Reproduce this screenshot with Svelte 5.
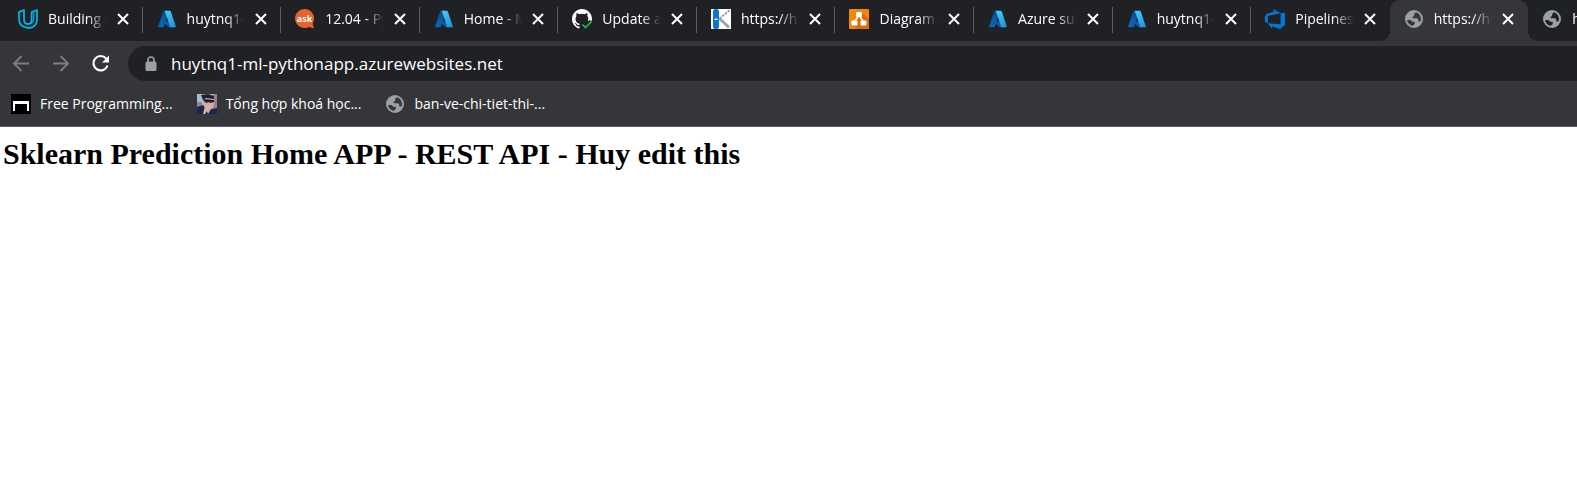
<script>
  const tabs = [
    { icon: 'udacity', title: 'Building a CI/CD' },
    { icon: 'azure', title: 'huytnq1-ml' },
    { icon: 'ask', title: '12.04 - Python' },
    { icon: 'azure', title: 'Home - Microsoft' },
    { icon: 'github', title: 'Update app' },
    { icon: 'kudu', title: 'https://huytnq1' },
    { icon: 'diagram', title: 'Diagram.drawio' },
    { icon: 'azure', title: 'Azure subscription' },
    { icon: 'azure', title: 'huytnq1-ml' },
    { icon: 'devops', title: 'Pipelines - Runs' },
    { icon: 'globe', title: 'https://huytnq1', active: true },
    { icon: 'globe', title: 'https://huytnq1' },
  ];
  const bookmarks = [
    { icon: 'bench', title: 'Free Programming...' },
    { icon: 'portrait', title: 'Tổng hợp khoá học...' },
    { icon: 'globe', title: 'ban-ve-chi-tiet-thi-...' },
  ];
  let address = $state('huytnq1-ml-pythonapp.azurewebsites.net');
</script>

<svg class="defs" aria-hidden="true">
  <defs>
    <linearGradient id="az1" x1="0.6" y1="0" x2="0.3" y2="1"><stop offset="0" stop-color="#114a8b" /><stop offset="1" stop-color="#0669bc" /></linearGradient>
    <linearGradient id="az2" x1="0.3" y1="0" x2="0.7" y2="1"><stop offset="0" stop-color="#3ccbf4" /><stop offset="1" stop-color="#2892df" /></linearGradient>
  </defs>
</svg>

{#snippet icon(name)}
  <svg class="icon" viewBox="0 0 20 20" aria-hidden="true">
    {#if name === 'udacity'}
      <g fill="none" stroke="#02b3e4" stroke-width="1.8" stroke-linejoin="round">
        <path d="M1 3.100 6 1v9.600c0 2.800 1.400 4.400 3.700 4.400 2.400 0 3.900-1.600 3.900-4.400V3.100L19 1v10c0 4.600-3.600 8-8.300 8C5 18.500 1 15.600 1 10.600z" />
        <path d="M9.700 15c4 0 6-2 6-5V2.500" stroke-width="1.200" />
      </g>
    {:else if name === 'azure'}
      <svg x="1" y="1" width="18" height="18" viewBox="3 5 90 86">
        <path fill="url(#az1)" d="M33.338 6.544h26.038l-27.03 80.087a4.152 4.152 0 0 1-3.933 2.824H8.149a4.145 4.145 0 0 1-3.928-5.47L29.404 9.368a4.152 4.152 0 0 1 3.934-2.825z" />
        <path fill="#0a5cb0" d="M71.175 60.261h-41.29a1.911 1.911 0 0 0-1.305 3.309l26.532 24.764a4.171 4.171 0 0 0 2.846 1.121h23.38z" />
        <path fill="url(#az2)" d="M66.595 9.364a4.145 4.145 0 0 0-3.928-2.82H33.648a4.146 4.146 0 0 1 3.928 2.82l25.184 74.62a4.146 4.146 0 0 1-3.928 5.472h29.02a4.146 4.146 0 0 0 3.927-5.472z" />
      </svg>
    {:else if name === 'ask'}
      <path fill="#e9622a" d="M9.500 0a9.500 9.500 0 1 0 4.500 17.900L19 19.200l-1.400-4.700A9.500 9.500 0 0 0 9.500 0z" />
      <text x="9.500" y="12.500" text-anchor="middle" class="ask">ask</text>
    {:else if name === 'github'}
      <path fill="#fff" d="M10 0C4.500 0 0 4.500 0 10c0 4.400 2.900 8.200 6.800 9.500.5.100.7-.2.7-.5v-1.700c-2.800.6-3.400-1.200-3.400-1.200-.4-1.100-1.100-1.500-1.100-1.500-.9-.6.100-.6.100-.6 1 .1 1.500 1 1.500 1 .9 1.500 2.300 1.100 2.900.8.100-.3.200-.6.400-.8-2.700-.8-4.400-2-4.400-5.400 0-1.100.4-2 1-2.700-.1-.3-.5-1.300.1-2.700 0 0 .9-.3 2.800 1a9 9 0 0 1 5 0c1.900-1.300 2.800-1 2.800-1 .6 1.400.2 2.400.1 2.700.6.700 1 1.600 1 2.700 0 1-.2 1.800-.5 2.400l3.300.8c.5-.9.9-1.800.9-2.800C20 4.500 15.500 0 10 0z" />
      <path fill="none" stroke="#202124" stroke-width="5" d="m10.500 15.500 3 3 6-6" />
      <path fill="none" stroke="#26b34a" stroke-width="1.700" d="m10.500 15.500 3 3 6-6" />
    {:else if name === 'kudu'}
      <path fill="#fff" d="M0 0h20v20H0z" />
      <rect x="2" y="0" width="6" height="20" rx="2.500" fill="#0b74cc" />
      <path fill="none" stroke="#a3a3a3" stroke-width="3" d="m8 9 10 9.500" />
      <path fill="none" stroke="#a3a3a3" stroke-width="2" stroke-dasharray="2.500 1" d="M8.500 9.500 19 1" />
      <path fill="#fff" d="m3 11 2-2 2 2z" />
    {:else if name === 'diagram'}
      <rect width="20" height="20" rx="1" fill="#f08705" />
      <path fill="#df6c0c" d="m12.500 3 7.500 7.500V20H8l-4.500-4.500z" />
      <path fill="none" stroke="#fff" stroke-width="1.600" d="M5.500 13 10 6l4.500 7" />
      <g fill="#fff"><rect x="7" y="3" width="6" height="5" rx="1" /><rect x="2.500" y="11.500" width="6" height="5" rx="1" /><rect x="11.500" y="11.500" width="6" height="5" rx="1" /></g>
    {:else if name === 'devops'}
      <svg width="20" height="20" viewBox="1 1 14 14">
        <path fill="#0078d7" d="M15 3.622v8.512L11.500 15l-5.425-1.975v1.958L3.004 10.970l8.951.7V4.005L15 3.622zm-2.984.428L6.994 1v2.001L2.382 4.356 1 6.130v4.029l1.978.873V5.869l9.038-1.818z" />
      </svg>
    {:else if name === 'globe'}
      <circle cx="10" cy="10" r="8" fill="none" stroke="#9aa0a6" stroke-width="2" />
      <path fill="#9aa0a6" d="M11.500 2c.5 1.500-.2 2.300-1.300 2.500v1.700c0 .8-.7 1.300-1.500 1.300v1.700h3.600c1.300 0 2 .8 2 1.900v1.500h3.200A8 8 0 0 1 9 17.900v-1.700c1.200-.2 1.700-.8 1.700-1.700v-1.700H8.200L6.500 11H2A8 8 0 0 1 11.500 2z" />
    {:else if name === 'bench'}
      <path d="M0 0h20v20H0z" />
      <path fill="#fff" d="M2 7h16v10h-2v-7H4v7H2z" />
    {:else if name === 'portrait'}
      <path fill="#9cc3cf" d="M0 0h20v20H0z" />
      <path fill="#9c7e93" d="M0 8h5v8H0zM16 0h4v20h-4z" />
      <path fill="#d9a7a0" d="M6 5h11v6l-2 5-5 2-4-8z" />
      <path fill="#24202b" d="M4 1 11 0l6 2v3L9 4 6 6zM7 5l10 1v2l-4 1-1-1-3 1-3-3z" />
      <path fill="#17294f" d="m0 13 6-2 3 4 2 5H0zM14 15l6-1v6h-9z" />
      <path fill="#ddb0aa" d="m8 12 5-1 1 3-4 3-2 3H6l1-4z" />
    {/if}
  </svg>
{/snippet}

<header class="browser">
  <nav class="tabs" aria-label="Tabs">
    {#each tabs as tab}
      <div class="tab" class:active={tab.active}>
        <a class="label" href="#page" aria-current={tab.active ? 'page' : undefined}>
          {@render icon(tab.icon)}
          <span class="title">{tab.title}</span>
        </a>
        <button class="close" aria-label="Close tab">
          <svg viewBox="0 0 20 20" aria-hidden="true"><path d="m5 5 10 10m0-10L5 15" /></svg>
        </button>
      </div>
    {/each}
  </nav>

  <div class="toolbar">
    <button class="tool" aria-label="Back" disabled>
      <svg viewBox="0 0 20 20" aria-hidden="true"><path d="M18 9.500H3m7.500-7.500L3 9.500l7.500 7.500" /></svg>
    </button>
    <button class="tool" aria-label="Forward" disabled>
      <svg viewBox="0 0 20 20" aria-hidden="true"><path d="M2 9.500h15M9.500 2 17 9.500 9.500 17" /></svg>
    </button>
    <button class="tool reload" aria-label="Reload">
      <svg viewBox="0 0 20 20" aria-hidden="true">
        <path d="M15.200 4.600A7.200 7.200 0 1 0 16.500 11.500" />
        <path class="tip" d="M18 1.500v7h-7z" />
      </svg>
    </button>
    <div class="address">
      <svg class="lock" viewBox="0 0 12 16" aria-hidden="true">
        <rect x="0.500" y="5.500" width="11" height="9.500" rx="1.500" />
        <path d="M3 6V4a3 3 0 0 1 6 0v2" />
      </svg>
      <input type="text" aria-label="Address" spellcheck="false" bind:value={address} />
    </div>
  </div>

  <nav class="bookmarks" aria-label="Bookmarks">
    {#each bookmarks as mark}
      <a href="#page">{@render icon(mark.icon)}<span>{mark.title}</span></a>
    {/each}
  </nav>
</header>

<main id="page">
  <h1>Sklearn Prediction Home APP - REST API - Huy edit this</h1>
</main>

<style>
  :global(body) {
    background: #fff;
  }
  .defs {
    position: absolute;
    width: 0;
    height: 0;
  }
  .browser {
    overflow: hidden;
    background: #35363a;
    border-bottom: 1px solid #5f6064;
    color: #fff;
    font-family: "Open Sans", "Noto Sans", sans-serif;
    font-size: 14px;
  }
  a {
    color: inherit;
    text-decoration: none;
  }
  button {
    flex: none;
    width: 20px;
    height: 20px;
    padding: 0;
    border: 0;
    background: none;
  }
  svg {
    display: block;
    flex: none;
  }
  button svg {
    width: 20px;
    height: 20px;
    fill: none;
    stroke: #fff;
    stroke-width: 2;
  }
  .icon {
    width: 20px;
    height: 20px;
  }
  .ask {
    fill: #fff;
    font: bold 9px "Open Sans", sans-serif;
  }
  .tabs {
    display: flex;
    height: 41px;
    padding-left: 4px;
    background: #202124;
  }
  .tab {
    position: relative;
    display: flex;
    flex: none;
    box-sizing: border-box;
    align-items: center;
    gap: 5px;
    width: 8.81%;
    padding: 0 10px 3px 14px;
  }
  .tab:not(.active)::after {
    content: "";
    position: absolute;
    top: 7px;
    right: 0;
    width: 1px;
    height: 26px;
    background: #5c5e62;
  }
  .tab:has(+ .active)::after {
    display: none;
  }
  .tab.active {
    border-radius: 10px 10px 0 0;
    background: #35363a;
  }
  .tab.active::before,
  .tab.active::after {
    content: "";
    position: absolute;
    bottom: 0;
    width: 10px;
    height: 10px;
  }
  .tab.active::before {
    right: 100%;
    background: radial-gradient(circle at 0 0, transparent 10px, #35363a 10px);
  }
  .tab.active::after {
    left: 100%;
    background: radial-gradient(circle at 100% 0, transparent 10px, #35363a 10px);
  }
  .label {
    display: flex;
    flex: 1;
    align-items: center;
    gap: 10px;
    min-width: 0;
  }
  .title {
    flex: 1;
    overflow: hidden;
    line-height: 20px;
    white-space: nowrap;
    mask-image: linear-gradient(90deg, #000 65%, transparent 98%);
  }
  .toolbar {
    display: flex;
    align-items: center;
    gap: 20px;
    padding: 5px 0 0 11px;
  }
  .tool svg {
    stroke-width: 1.8;
  }
  .tool:disabled svg {
    stroke: #7d7e82;
  }
  .reload svg {
    stroke-width: 2.2;
  }
  button .tip {
    fill: #fff;
    stroke: none;
  }
  .address {
    display: flex;
    flex: 1;
    align-items: center;
    gap: 14px;
    height: 35px;
    margin-left: -3px;
    padding-left: 17px;
    border-radius: 18px 0 0 18px;
    background: #202124;
  }
  .lock {
    width: 12px;
    height: 16px;
    fill: #9aa0a6;
  }
  .lock path {
    fill: none;
    stroke: #9aa0a6;
    stroke-width: 1.6;
  }
  input {
    flex: 1;
    min-width: 0;
    padding: 0;
    border: 0;
    outline: 0;
    background: none;
    color: #fff;
    font: 17px "Open Sans", "Noto Sans", sans-serif;
  }
  .bookmarks {
    display: flex;
    align-items: center;
    gap: 24px;
    height: 45px;
    padding-left: 11px;
  }
  .bookmarks a {
    display: flex;
    align-items: center;
    gap: 9px;
    white-space: nowrap;
  }
  main {
    padding: 10px 3px;
  }
  h1 {
    margin: 0;
    color: #000;
    font: bold 30px/34px "Liberation Serif", "Times New Roman", serif;
  }
</style>
